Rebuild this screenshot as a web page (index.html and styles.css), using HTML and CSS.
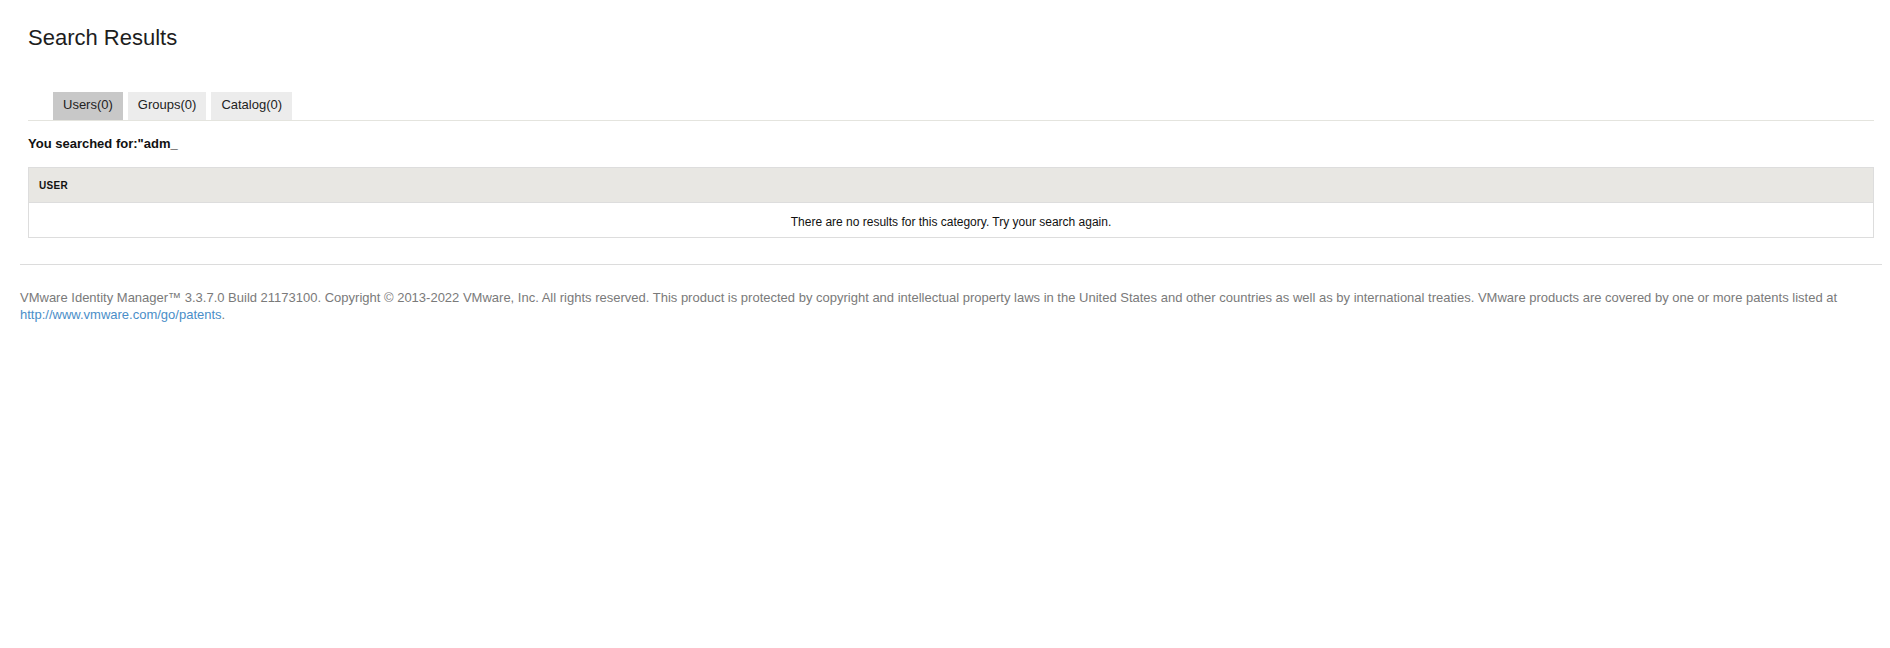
FILE: index.html
```html
<!DOCTYPE html>
<html lang="en">
<head>
<meta charset="utf-8">
<title>Search Results</title>
<link rel="stylesheet" href="styles.css">
</head>
<body>
<div class="page">
  <main class="content">
    <h1 class="title">Search Results</h1>
    <nav class="tabs">
      <span class="tab active">Users(0)</span>
      <span class="tab">Groups(0)</span>
      <span class="tab">Catalog(0)</span>
    </nav>
    <p class="searched">You searched for:"adm_</p>
    <table class="results">
      <thead>
        <tr><th>USER</th></tr>
      </thead>
      <tbody>
        <tr><td class="empty">There are no results for this category. Try your search again.</td></tr>
      </tbody>
    </table>
  </main>
  <footer class="footer">
    <p class="legal">VMware Identity Manager™ 3.3.7.0 Build 21173100. Copyright © 2013-2022 VMware, Inc. All rights reserved. This product is protected by copyright and intellectual property laws in the United States and other countries as well as by international treaties. VMware products are covered by one or more patents listed at <a href="#" class="link">http://www.vmware.com/go/patents</a>.</p>
  </footer>
</div>
</body>
</html>
```

FILE: styles.css
```css
html, body {
  margin: 0;
  padding: 0;
  background: #ffffff;
}

body {
  font-family: "Liberation Sans", Arial, sans-serif;
  color: #1a1a1a;
}

.page {
  padding: 0 8px 0 20px;
}

.content {
  padding: 0 8px 26px;
  border-bottom: 1px solid #dcdcdc;
}

.title {
  margin: 0;
  padding-top: 25px;
  font-size: 22px;
  font-weight: normal;
  line-height: 25px;
  color: #1d1d1d;
}

.tabs {
  display: flex;
  gap: 5px;
  margin-top: 42px;
  padding-left: 25px;
  border-bottom: 1px solid #e4e4de;
}

.tab {
  display: block;
  padding: 6px 10px 8px;
  font-size: 13px;
  line-height: 14px;
  background: #ececec;
  color: #222;
}

.tab.active {
  background: #c8c8c8;
}

.searched {
  margin: 15px 0 16px;
  font-size: 13px;
  font-weight: bold;
  line-height: 15px;
  color: #111;
}

.results {
  width: 100%;
  border-collapse: collapse;
  border: 1px solid #dddddd;
}

.results th {
  height: 35px;
  padding: 0 0 0 10px;
  box-sizing: border-box;
  text-align: left;
  font-size: 10px;
  font-weight: bold;
  letter-spacing: 0.3px;
  background: #e8e7e3;
  border-bottom: 1px solid #dddddd;
  color: #111;
}

.results td.empty {
  height: 35px;
  padding: 4px 0 0;
  box-sizing: border-box;
  text-align: center;
  font-size: 12px;
  color: #111;
}

.footer {
  padding-top: 24px;
}

.legal {
  margin: 0;
  font-size: 13px;
  line-height: 17px;
  color: #7a7a7a;
}

.link {
  color: #4a8ec8;
  text-decoration: none;
}
```
